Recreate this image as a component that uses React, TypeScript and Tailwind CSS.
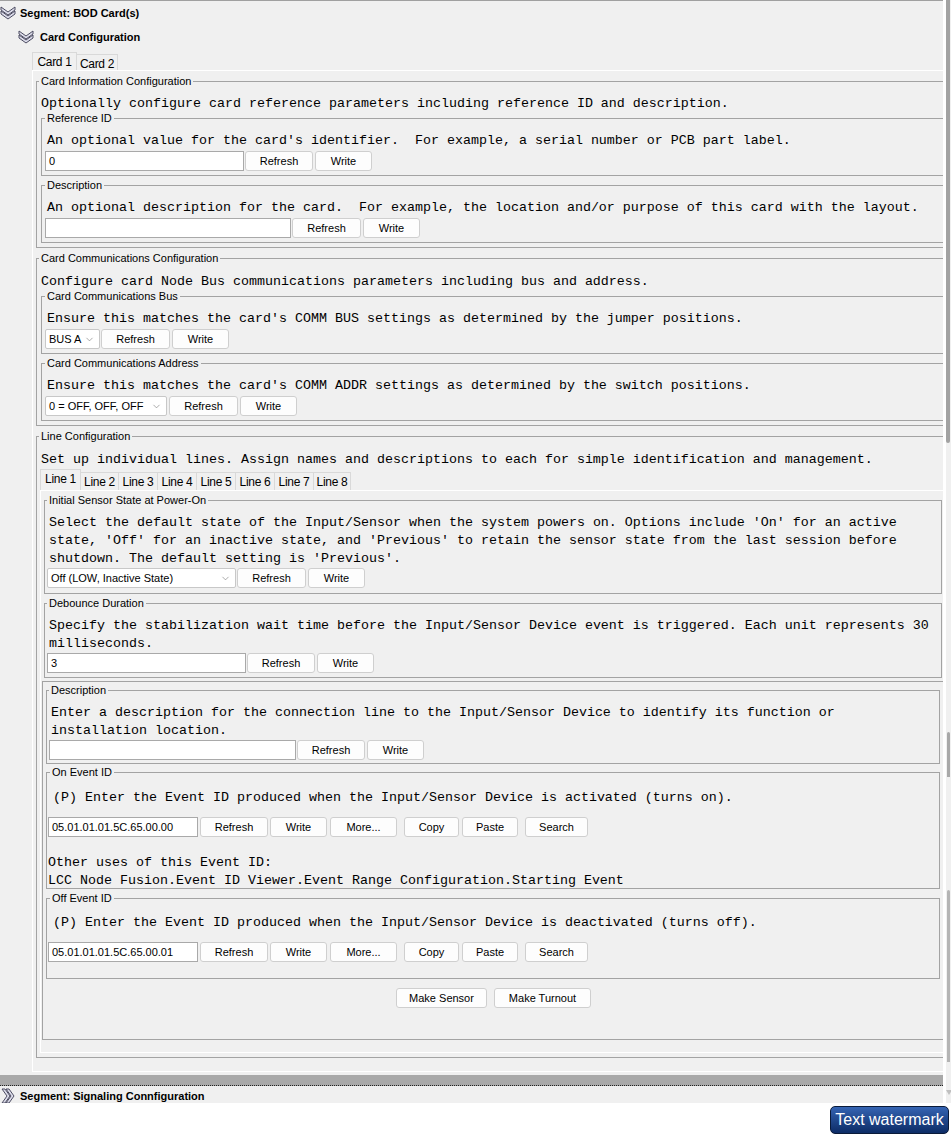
import React from "react";
import { ChevronDown } from "lucide-react";

const mono =
  "font-['Liberation_Mono','Courier_New',monospace] text-[13.33px] leading-[18px] whitespace-pre text-black";

function DoubleChevron({ right = false }: { right?: boolean }) {
  return (
    <svg
      width="16"
      height="14"
      viewBox="0 0 16 14"
      className={right ? "-rotate-90 shrink-0" : "shrink-0"}
    >
      <polygon
        points="1,1 8,6 15,1 15,4 8,9 1,4"
        fill="#dcdcea"
        stroke="#4d4d62"
        strokeWidth="1"
        strokeLinejoin="round"
      />
      <polygon
        points="1,5 8,10 15,5 15,8 8,13 1,8"
        fill="#dcdcea"
        stroke="#4d4d62"
        strokeWidth="1"
        strokeLinejoin="round"
      />
    </svg>
  );
}

function Group({
  title,
  className = "",
  lg = "ml-0",
  children,
}: {
  title: string;
  className?: string;
  lg?: string;
  children: React.ReactNode;
}) {
  return (
    <fieldset className={`border border-[#a3a3a3] min-w-0 ${className}`}>
      <legend className={`${lg} px-[2px] text-[11px] leading-[13px] text-black`}>
        {title}
      </legend>
      {children}
    </fieldset>
  );
}

function Btn({ w, children }: { w: string; children: React.ReactNode }) {
  return (
    <div
      className={`h-[20px] ${w} shrink-0 flex items-center justify-center bg-[#fdfdfd] border border-[#cfcfcf] rounded-[3px] text-[11px] text-black`}
    >
      {children}
    </div>
  );
}

function Input({ w, value = "" }: { w: string; value?: string }) {
  return (
    <div
      className={`h-[20px] ${w} shrink-0 flex items-center bg-white border border-[#a9a9a9] pl-[3px] text-[11px] text-black`}
    >
      {value}
    </div>
  );
}

function Combo({ w, value }: { w: string; value: string }) {
  return (
    <div
      className={`h-[20px] ${w} shrink-0 flex items-center justify-between bg-white border border-[#c8c8c8] rounded-[2px] pl-[3px] pr-[4px] text-[11px] text-black`}
    >
      <span>{value}</span>
      <ChevronDown size={11} strokeWidth={1.2} color="#666" />
    </div>
  );
}

function Tab({
  label,
  w,
  selected = false,
  h,
}: {
  label: string;
  w: string;
  selected?: boolean;
  h: string;
}) {
  return (
    <div
      className={`${w} ${h} shrink-0 flex justify-center border-t border-l border-r border-[#d9d9d9] bg-[#f0f0f0] text-[12px] tracking-[-0.3px] text-black ${
        selected ? "" : "-ml-[1px]"
      }`}
    >
      {label}
    </div>
  );
}

function EventRow({ id }: { id: string }) {
  return (
    <div className="flex">
      <Input w="w-[150px]" value={id} />
      <div className="ml-[2px]" />
      <Btn w="w-[68px]">Refresh</Btn>
      <div className="ml-[2px]" />
      <Btn w="w-[57px]">Write</Btn>
      <div className="ml-[3px]" />
      <Btn w="w-[67px]">More...</Btn>
      <div className="ml-[7px]" />
      <Btn w="w-[55px]">Copy</Btn>
      <div className="ml-[3px]" />
      <Btn w="w-[56px]">Paste</Btn>
      <div className="ml-[7px]" />
      <Btn w="w-[63px]">Search</Btn>
    </div>
  );
}

export default function App() {
  return (
    <div className="relative w-[951px] h-[1134px] bg-white overflow-hidden font-['Liberation_Sans',Arial,sans-serif] text-black">
      <div className="flex">
        {/* main viewport */}
        <div className="w-[943px] h-[1103px] shrink-0 bg-[#f0f0f0] overflow-hidden border-t border-[#a0a0a0] flex flex-col">
          {/* Segment header */}
          <div className="h-[24px] shrink-0 flex items-center">
            <DoubleChevron />
            <span className="ml-[4px] text-[11px] font-bold">Segment: BOD Card(s)</span>
          </div>
          <div className="h-[24px] shrink-0 flex items-center pl-[18px]">
            <DoubleChevron />
            <span className="ml-[6px] text-[11px] font-bold">Card Configuration</span>
          </div>

          {/* card tabs */}
          <div className="mt-[3px] pl-[32px] h-[18px] shrink-0 flex items-end">
            <Tab label="Card 1" w="w-[45px]" h="h-[18px]" selected />
            <Tab label="Card 2" w="w-[42px]" h="h-[16px]" />
          </div>

          {/* card panel */}
          <div className="ml-[32px] w-[930px] shrink-0 border-l border-t border-b border-white pt-[4px] pl-[3px] pb-[13px]">
            <Group
              title="Card Information Configuration"
              lg="-ml-[2px]"
              className="w-[922px] pl-[4px] pr-[3px] pb-[4px]"
            >
              <div className={`${mono} pt-[7px] -mb-[2px]`}>
                Optionally configure card reference parameters including reference ID and description.
              </div>
              <Group title="Reference ID" className="mt-[1px] px-[3px] pb-[4px]">
                <div className={`${mono} pt-[7px] pl-[2px]`}>
                  An optional value for the card's identifier.  For example, a serial number or PCB part label.
                </div>
                <div className="mt-[1px] flex">
                  <Input w="w-[199px]" value="0" />
                  <div className="ml-[1px]" />
                  <Btn w="w-[68px]">Refresh</Btn>
                  <div className="ml-[2px]" />
                  <Btn w="w-[57px]">Write</Btn>
                </div>
              </Group>
              <Group title="Description" className="mt-[3px] px-[3px] pb-[4px]">
                <div className={`${mono} pt-[7px] pl-[2px]`}>
                  An optional description for the card.  For example, the location and/or purpose of this card with the layout.
                </div>
                <div className="mt-[1px] flex">
                  <Input w="w-[246px]" />
                  <div className="ml-[1px]" />
                  <Btn w="w-[69px]">Refresh</Btn>
                  <div className="ml-[2px]" />
                  <Btn w="w-[57px]">Write</Btn>
                </div>
              </Group>
            </Group>

            <Group
              title="Card Communications Configuration"
              lg="-ml-[2px]"
              className="mt-[4px] w-[922px] pl-[4px] pr-[3px] pb-[4px]"
            >
              <div className={`${mono} pt-[8px] -mb-[2px]`}>
                Configure card Node Bus communications parameters including bus and address.
              </div>
              <Group title="Card Communications Bus" className="mt-[1px] px-[3px] pb-[4px]">
                <div className={`${mono} pt-[7px] pl-[2px]`}>
                  Ensure this matches the card's COMM BUS settings as determined by the jumper positions.
                </div>
                <div className="mt-[1px] flex">
                  <Combo w="w-[55px]" value="BUS A" />
                  <div className="ml-[1px]" />
                  <Btn w="w-[69px]">Refresh</Btn>
                  <div className="ml-[2px]" />
                  <Btn w="w-[57px]">Write</Btn>
                </div>
              </Group>
              <Group title="Card Communications Address" className="mt-[3px] px-[3px] pb-[4px]">
                <div className={`${mono} pt-[7px] pl-[2px]`}>
                  Ensure this matches the card's COMM ADDR settings as determined by the switch positions.
                </div>
                <div className="mt-[1px] flex">
                  <Combo w="w-[122px]" value="0 = OFF, OFF, OFF" />
                  <div className="ml-[2px]" />
                  <Btn w="w-[69px]">Refresh</Btn>
                  <div className="ml-[2px]" />
                  <Btn w="w-[57px]">Write</Btn>
                </div>
              </Group>
            </Group>

            <Group
              title="Line Configuration"
              lg="-ml-[1px]"
              className="mt-[4px] w-[922px] px-[3px] pb-[4px]"
            >
              <div className={`${mono} pt-[8px] pl-[1px]`}>
                Set up individual lines. Assign names and descriptions to each for simple identification and management.
              </div>
              {/* line tabs */}
              <div className="h-[21px] flex items-end">
                <Tab label="Line 1" w="w-[41px]" h="h-[21px]" selected />
                <Tab label="Line 2" w="w-[39px]" h="h-[18px]" />
                <Tab label="Line 3" w="w-[40px]" h="h-[18px]" />
                <Tab label="Line 4" w="w-[40px]" h="h-[18px]" />
                <Tab label="Line 5" w="w-[40px]" h="h-[18px]" />
                <Tab label="Line 6" w="w-[40px]" h="h-[18px]" />
                <Tab label="Line 7" w="w-[40px]" h="h-[18px]" />
                <Tab label="Line 8" w="w-[38px]" h="h-[18px]" />
              </div>
              {/* line tab panel */}
              <div className="border-l border-t border-b border-white pl-[1px] pt-[3px] pb-[12px]">
                <Group
                  title="Initial Sensor State at Power-On"
                  className="ml-[2px] w-[898px] px-[2px] pb-[5px]"
                >
                  <div className={`${mono} pt-[7px] pl-[2px]`}>
                    {"Select the default state of the Input/Sensor when the system powers on. Options include 'On' for an active\nstate, 'Off' for an inactive state, and 'Previous' to retain the sensor state from the last session before\nshutdown. The default setting is 'Previous'."}
                  </div>
                  <div className="flex">
                    <Combo w="w-[189px]" value="Off (LOW, Inactive State)" />
                    <div className="ml-[1px]" />
                    <Btn w="w-[69px]">Refresh</Btn>
                    <div className="ml-[2px]" />
                    <Btn w="w-[57px]">Write</Btn>
                  </div>
                </Group>
                <Group
                  title="Debounce Duration"
                  className="mt-[3px] ml-[2px] w-[898px] px-[2px] pb-[4px]"
                >
                  <div className={`${mono} pt-[7px] pl-[2px]`}>
                    {"Specify the stabilization wait time before the Input/Sensor Device event is triggered. Each unit represents 30\nmilliseconds."}
                  </div>
                  <div className="flex">
                    <Input w="w-[199px]" value="3" />
                    <div className="ml-[1px]" />
                    <Btn w="w-[68px]">Refresh</Btn>
                    <div className="ml-[2px]" />
                    <Btn w="w-[57px]">Write</Btn>
                  </div>
                </Group>

                {/* wrapper */}
                <div className="mt-[3px] w-[903px] border border-[#a3a3a3] pl-[3px] pr-[3px] pt-[2px] pb-[31px]">
                  <Group title="Description" className="w-[894px] px-[2px] pb-[3px]">
                    <div className={`${mono} pt-[7px] pl-[2px]`}>
                      {"Enter a description for the connection line to the Input/Sensor Device to identify its function or\ninstallation location."}
                    </div>
                    <div className="flex">
                      <Input w="w-[247px]" />
                      <div className="ml-[1px]" />
                      <Btn w="w-[68px]">Refresh</Btn>
                      <div className="ml-[2px]" />
                      <Btn w="w-[57px]">Write</Btn>
                    </div>
                  </Group>

                  <Group
                    title="On Event ID"
                    lg="ml-[2px]"
                    className="mt-[2px] w-[894px] px-[1px] pb-[0px]"
                  >
                    <div className={`${mono} pt-[10px] pl-[5px]`}>
                      (P) Enter the Event ID produced when the Input/Sensor Device is activated (turns on).
                    </div>
                    <div className="mt-[10px]">
                      <EventRow id="05.01.01.01.5C.65.00.00" />
                    </div>
                    <div className={`${mono} pt-[17px] -mb-[2px]`}>
                      {"Other uses of this Event ID:\nLCC Node Fusion.Event ID Viewer.Event Range Configuration.Starting Event"}
                    </div>
                  </Group>

                  <Group
                    title="Off Event ID"
                    lg="ml-[2px]"
                    className="mt-[3px] w-[894px] px-[1px] pb-[16px]"
                  >
                    <div className={`${mono} pt-[9px] pl-[5px]`}>
                      (P) Enter the Event ID produced when the Input/Sensor Device is deactivated (turns off).
                    </div>
                    <div className="mt-[10px]">
                      <EventRow id="05.01.01.01.5C.65.00.01" />
                    </div>
                  </Group>

                  <div className="mt-[9px] flex justify-center gap-[7px]">
                    <Btn w="w-[91px]">Make Sensor</Btn>
                    <Btn w="w-[97px]">Make Turnout</Btn>
                  </div>
                </div>
              </div>
            </Group>
          </div>

          {/* separator band */}
          <div className="mt-[3px] h-[11px] shrink-0 bg-[#a9a9a9] border-b border-dotted border-[#222]" />
          <div className="h-[17px] shrink-0 flex items-center pt-[3px]">
            <DoubleChevron right />
            <span className="ml-[4px] text-[11px] font-bold">Segment: Signaling Connfiguration</span>
          </div>
        </div>

        {/* right scroll strip */}
        <div className="relative w-[8px] h-[1103px] shrink-0 bg-[#f0f0f0] border-l-[3px] border-white">
          <div className="absolute left-[0px] top-0 w-[4px] h-[443px] bg-[#a2a2a2] rounded-b-[2px]" />
          <div className="absolute left-[1px] top-[732px] w-[3px] h-[45px] bg-[#a8a8a8] rounded-t-[2px]" />
          <div className="absolute left-[1px] top-[890px] w-[3px] h-[172px] bg-[#b4b4b4] rounded-t-[2px]" />
          <div className="absolute left-[0px] top-[1090px] w-0 h-0 border-l-[3px] border-r-[3px] border-t-[5px] border-l-transparent border-r-transparent border-t-[#c0c0c0]" />
        </div>
      </div>

      {/* watermark */}
      <div className="absolute left-[830px] top-[1106px] w-[119px] h-[28px] rounded-[5px] border border-[#0a1a38] bg-linear-to-b from-[#3564b3] to-[#0d2c66] flex items-center justify-center text-[16px] text-white">
        Text watermark
      </div>
    </div>
  );
}
